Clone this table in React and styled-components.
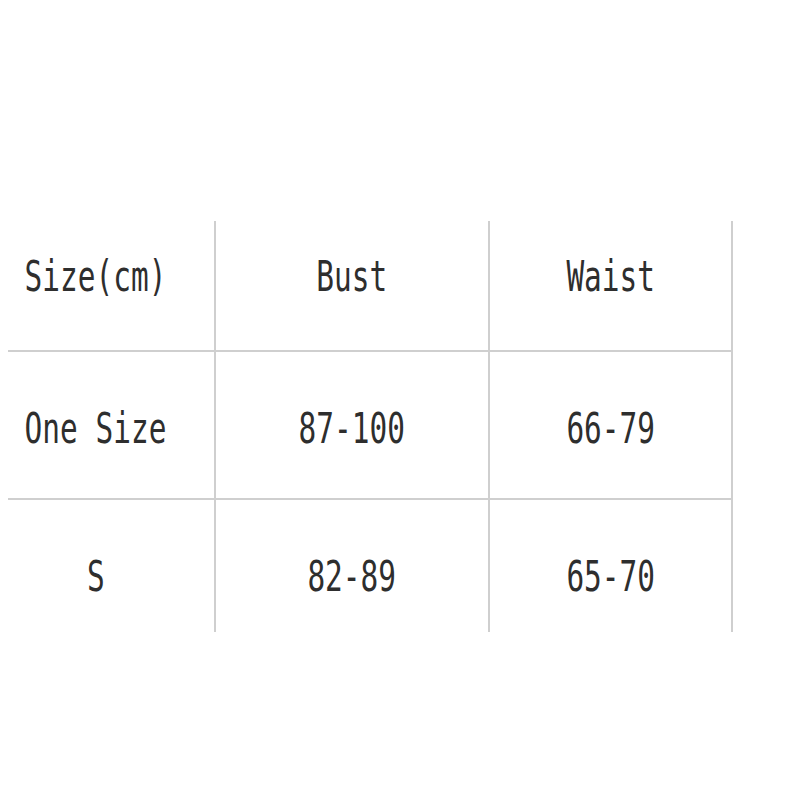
import React from "react";
import styled, { createGlobalStyle } from "styled-components";

const Global = createGlobalStyle`
  html, body { margin: 0; padding: 0; background: #ffffff; }
  body { width: 800px; height: 800px; overflow: hidden; }
`;

const Page = styled.div`
  width: 800px;
  height: 800px;
  padding: 221px 0 0 8px;
  box-sizing: border-box;
  background: #ffffff;
`;

const Table = styled.div`
  display: grid;
  grid-template-columns: 208px 274px 243px;
  width: 725px;
`;

const Cell = styled.div`
  box-sizing: border-box;
  height: ${(p) => p.$h}px;
  padding-top: ${(p) => p.$top}px;
  padding-right: ${(p) => (p.$first ? 30 : 0)}px;
  display: flex;
  justify-content: center;
  align-items: flex-start;
  border-right: 2px solid #cfcfcf;
  border-bottom: ${(p) => (p.$last ? "none" : "2px solid #cfcfcf")};
`;

const Label = styled.span`
  display: inline-block;
  font-family: "DejaVu Sans Mono", "Liberation Mono", monospace;
  font-size: 43px;
  line-height: 43px;
  color: #2e2e2e;
  white-space: pre;
  transform: scaleX(0.685);
  transform-origin: center;
`;

const rows = [
  { h: 131, top: 34, cells: ["Size(cm)", "Bust", "Waist"] },
  { h: 148, top: 55, cells: ["One Size", "87-100", "66-79"] },
  { h: 132, top: 55, cells: ["S", "82-89", "65-70"] },
];

export default function App() {
  return (
    <>
      <Global />
      <Page>
        <Table>
          {rows.map((r, ri) =>
            r.cells.map((c, ci) => (
              <Cell
                key={`${ri}-${ci}`}
                $h={r.h}
                $top={r.top}
                $first={ci === 0}
                $last={ri === rows.length - 1}
              >
                <Label>{c}</Label>
              </Cell>
            ))
          )}
        </Table>
      </Page>
    </>
  );
}
